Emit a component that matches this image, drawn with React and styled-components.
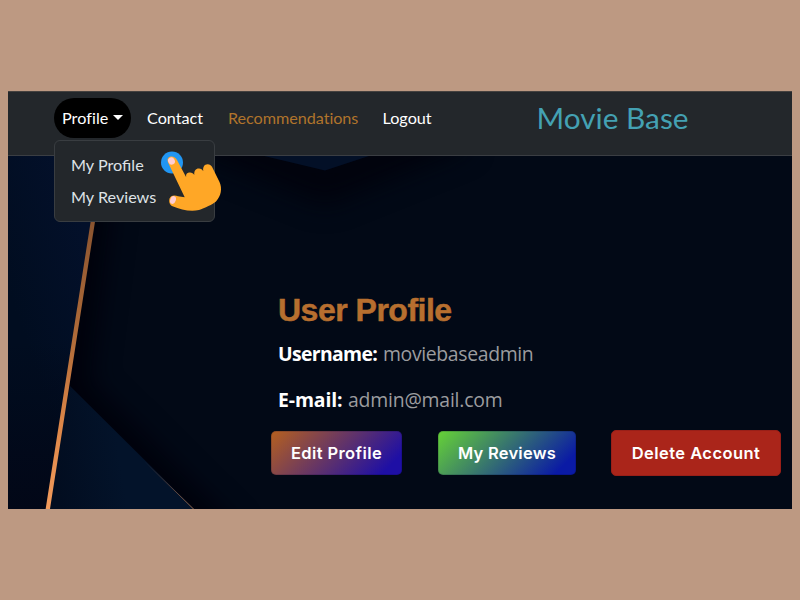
import React from 'react';
import styled, { createGlobalStyle } from 'styled-components';

const GlobalStyle = createGlobalStyle`
  * { box-sizing: border-box; }
  body { margin: 0; background: #bd9982; }
`;

const Page = styled.div`
  height: 600px;
  padding: 91px 8px;
  overflow: hidden;
  background: #bd9982;
`;

const Screen = styled.div`
  position: relative;
  isolation: isolate;
  display: flex;
  flex-direction: column;
  height: 418px;
  background: #020916;
  overflow: hidden;
`;

const Backdrop = styled.svg`
  position: absolute;
  inset: 0;
  z-index: -1;
`;

const Navbar = styled.nav`
  display: flex;
  align-items: flex-start;
  height: 65px;
  padding: 7px 0 0 46px;
  background: #23272b;
  border-top: 1px solid #45413f;
  border-bottom: 1px solid #3b3e43;
  font-family: Lato, sans-serif;
`;

const MenuHolder = styled.div`
  position: relative;
  margin-top: -1px;
`;

const ProfileToggle = styled.button`
  display: flex;
  align-items: center;
  gap: 5px;
  width: 77px;
  height: 40px;
  padding: 0 0 2px 8px;
  border: 0;
  border-radius: 20px;
  background: #000;
  color: #fff;
  font: 16.2px Lato, sans-serif;
  letter-spacing: 0.05px;
`;

const Caret = styled.span`
  border: 5px solid transparent;
  border-top-color: #fff;
  border-bottom: 0;
`;

const Menu = styled.div`
  position: absolute;
  top: 42px;
  left: 0;
  z-index: 2;
  width: 161px;
  height: 82px;
  padding: 8px 0;
  border: 1px solid #393d41;
  border-radius: 6px;
  background: #23272b;
`;

const MenuItem = styled.a`
  display: block;
  height: 32px;
  padding-left: 16px;
  color: #dee2e6;
  font-size: 16.2px;
  line-height: 32px;
`;

const NavLink = styled.a`
  width: ${(p) => p.$width}px;
  margin-top: -1px;
  margin-left: ${(p) => p.$gap}px;
  color: ${(p) => p.$color || '#fff'};
  font-size: 16.2px;
  line-height: 40px;
  letter-spacing: ${(p) => p.$spacing || 0}px;
  white-space: nowrap;
`;

const Brand = styled.div`
  margin: -1px 0 0 105px;
  color: #44a1b3;
  font-size: 29.8px;
  line-height: 40px;
  white-space: nowrap;
`;

const Pointer = styled.svg`
  position: absolute;
  left: 103px;
  top: 3px;
`;

const Main = styled.main`
  padding: 134px 0 0 263px;
`;

const Title = styled.h1`
  margin: 0 0 0 7px;
  color: #b76f2f;
  font: bold 32px/40px "Liberation Sans", sans-serif;
  letter-spacing: -0.5px;
  -webkit-text-stroke: 0.5px #b76f2f;
`;

const Detail = styled.p`
  margin: 0 0 0 7px;
  height: 46px;
  color: #9b9c9f;
  font: 19.4px/48px "Open Sans", sans-serif;
  white-space: nowrap;
`;

const Label = styled.strong`
  display: inline-block;
  width: ${(p) => p.$width}px;
  color: #fff;
  font-weight: 700;
  letter-spacing: ${(p) => p.$spacing || 0}px;
`;

const Value = styled.span`
  letter-spacing: ${(p) => p.$spacing || 0}px;
  font-weight: 400;
`;

const Actions = styled.div`
  display: flex;
  align-items: center;
  margin-top: 8px;
`;

const Action = styled.button`
  flex: none;
  width: ${(p) => p.$width}px;
  height: ${(p) => p.$height || 44}px;
  margin-right: ${(p) => p.$gap || 0}px;
  padding: 0 0 1px;
  border: ${(p) => p.$border || '1px solid rgba(0, 0, 40, .16)'};
  border-radius: 5px;
  background: ${(p) => p.$fill};
  background-origin: border-box;
  color: #fff;
  font: 600 16.5px Inter, sans-serif;
  letter-spacing: ${(p) => p.$spacing || 0}px;
  white-space: nowrap;
`;

function Artwork() {
  return (
    <Backdrop width="784" height="418" viewBox="8 91 784 418">
      <defs>
        <linearGradient id="left" x1="8" y1="290" x2="95" y2="260" gradientUnits="userSpaceOnUse">
          <stop stopColor="#010d20" /><stop offset="1" stopColor="#03102a" />
        </linearGradient>
        <linearGradient id="leftFade" x1="0" y1="0" x2="0" y2="1">
          <stop offset=".6" stopColor="#020717" stopOpacity="0" /><stop offset="1" stopColor="#020717" />
        </linearGradient>
        <linearGradient id="lower" x1="55" y1="470" x2="120" y2="460" gradientUnits="userSpaceOnUse">
          <stop stopColor="#020d20" /><stop offset="1" stopColor="#03132a" />
        </linearGradient>
        <linearGradient id="copper" x1="0" y1="220" x2="0" y2="509" gradientUnits="userSpaceOnUse">
          <stop stopColor="#8a5430" /><stop offset=".4" stopColor="#af6b39" /><stop offset=".7" stopColor="#dc8648" /><stop offset="1" stopColor="#f39b5c" />
        </linearGradient>
        <linearGradient id="edge" x1="145" y1="461" x2="194" y2="509" gradientUnits="userSpaceOnUse">
          <stop stopColor="#8a5d45" stopOpacity="0" /><stop offset="1" stopColor="#93654a" />
        </linearGradient>
        <filter id="soft" filterUnits="userSpaceOnUse" x="-60" y="20" width="900" height="600" colorInterpolationFilters="sRGB">
          <feGaussianBlur stdDeviation="13" />
        </filter>
      </defs>
      <path d="M190 126 325 180 460 126" fill="none" stroke="#01030d" strokeWidth="48" filter="url(#soft)" />
      <path d="M98 150 68 390 225 545" fill="none" stroke="#00010b" strokeWidth="40" filter="url(#soft)" />
      <path d="M8 91H113L46 509H8Z" fill="url(#left)" />
      <path d="M8 91H113L46 509H8Z" fill="url(#leftFade)" />
      <path d="M70 386 194 509H47Z" fill="url(#lower)" />
      <path d="M260 155 325 170.500 372 155Z" fill="#031027" />
      <path d="M142 459 194 509.500" stroke="url(#edge)" strokeWidth="1" />
      <path d="M94.500 211 47.500 511" stroke="url(#copper)" strokeWidth="4.300" />
    </Backdrop>
  );
}

function Hand() {
  return (
    <Pointer width="68" height="70" viewBox="158 144 68 70" aria-hidden="true">
      <circle cx="172" cy="162.500" r="11" fill="#2196f3" />
      <path d="M168.500 163.500C166.500 159.500 168 157.500 170 156.800C173 156 175.500 157.500 177 160L186.200 177.200C185.500 173.500 188 172.500 190 172.600C192 172.600 193.500 173.500 194.300 175C193.800 170.500 196 168.200 199 168.400C201 168.600 202.500 169.500 203.300 171.200C202.500 167 204.500 164.200 207.500 164.200C210 164.200 211.500 165.500 212.500 167.800L219.500 182C222.500 188.500 221 196 216 201.500C213 204.300 204.500 208 199 210C190 212 181 209.500 172.500 206.200C168.500 204.500 168.300 198.500 171 196.500C173 195 176 195.500 178 196.200L184.700 197.200Z" fill="#ffa726" />
      <ellipse cx="171.500" cy="161" rx="3.300" ry="3.700" fill="#ffcdd2" transform="rotate(-28 171.500 161)" />
      <ellipse cx="173" cy="200" rx="2.800" ry="4" fill="#ffcdd2" transform="rotate(18 173 200)" />
    </Pointer>
  );
}

export default function App() {
  return (
    <>
      <GlobalStyle />
      <Page>
        <Screen>
          <Artwork />
          <Navbar>
            <MenuHolder>
              <ProfileToggle>Profile<Caret /></ProfileToggle>
              <Menu>
                <MenuItem>My Profile</MenuItem>
                <MenuItem>My Reviews</MenuItem>
                <Hand />
              </Menu>
            </MenuHolder>
            <NavLink $gap={16} $width={57}>Contact</NavLink>
            <NavLink $gap={24} $width={131} $color="#b0742b" $spacing={-0.05}>Recommendations</NavLink>
            <NavLink $gap={23.5} $width={49}>Logout</NavLink>
            <Brand>Movie Base</Brand>
          </Navbar>
          <Main>
            <Title>User Profile</Title>
            <Detail><Label $width={105} $spacing={-0.65}>Username:</Label><Value $spacing={-0.35}>moviebaseadmin</Value></Detail>
            <Detail><Label $width={70} $spacing={-0.1}>E-mail:</Label><Value $spacing={-0.2}>admin@mail.com</Value></Detail>
            <Actions>
              <Action $width={131} $gap={36} $spacing={0.4} $fill="linear-gradient(135deg, #b5601f 0%, #1e0fa5 88%)">Edit Profile</Action>
              <Action $width={138} $gap={35} $spacing={0.25} $fill="linear-gradient(135deg, #66d336 0%, #0a1aa5 88%)">My Reviews</Action>
              <Action $width={170} $spacing={0.45} $height={46} $border="1px solid #991f18" $fill="#aa251a">Delete Account</Action>
            </Actions>
          </Main>
        </Screen>
      </Page>
    </>
  );
}
